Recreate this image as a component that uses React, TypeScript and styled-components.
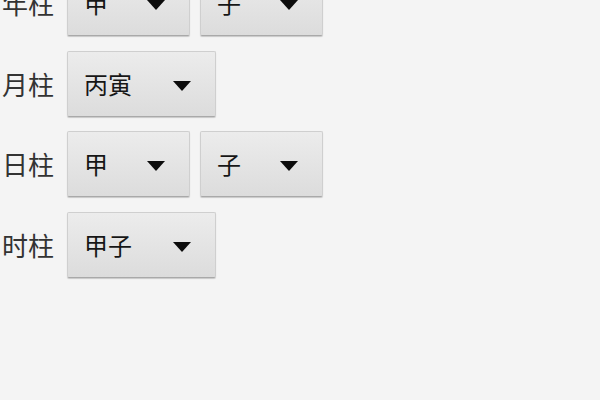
import { createGlobalStyle, styled } from "styled-components";

const GlobalStyle = createGlobalStyle`
  html, body {
    margin: 0;
    padding: 0;
    height: 100%;
    background: #f4f4f4;
    overflow: hidden;
  }
  body {
    font-family: "Noto Sans CJK SC", "Noto Sans", sans-serif;
  }
`;

type Pillar = {
  label: string;
  choices: string[];
};

const pillars: Pillar[] = [
  { label: "年柱", choices: ["甲", "子"] },
  { label: "月柱", choices: ["丙寅"] },
  { label: "日柱", choices: ["甲", "子"] },
  { label: "时柱", choices: ["甲子"] },
];

export default function App() {
  return (
    <>
      <GlobalStyle />
      <Form>
        {pillars.map((p) => (
          <Row key={p.label}>
            <Label>{p.label}</Label>
            {p.choices.map((c, i) => (
              <Spinner key={`${p.label}${i}`} $wide={p.choices.length === 1}>
                <SpinnerText>{c}</SpinnerText>
                <Caret viewBox="0 0 18 10">
                  <polygon points="0,0 18,0 9,10" />
                </Caret>
              </Spinner>
            ))}
          </Row>
        ))}
      </Form>
    </>
  );
}

const Form = styled.div`
  display: flex;
  flex-direction: column;
  gap: 14.5px;
  margin-top: -30px;
  padding-left: 2px;
`;

const Row = styled.div`
  display: flex;
  align-items: center;
  height: 66px;
`;

const Label = styled.span`
  width: 65px;
  font-size: 26px;
  line-height: 1;
  color: #333;
  letter-spacing: 0;
`;

const Spinner = styled.div<{ $wide: boolean }>`
  box-sizing: border-box;
  display: flex;
  align-items: center;
  justify-content: space-between;
  width: ${({ $wide }) => ($wide ? "149px" : "123px")};
  height: 66px;
  margin-right: 10px;
  padding: 0 24px 0 16px;
  border: 1px solid #cfcfcf;
  border-bottom-color: #a9a9a9;
  border-radius: 2px;
  background: linear-gradient(#ececec, #dcdcdc);
  box-shadow: 0 1px 1px rgba(0, 0, 0, 0.18);
`;

const SpinnerText = styled.span`
  font-size: 24px;
  line-height: 1;
  color: #161616;
`;

const Caret = styled.svg`
  width: 18px;
  height: 10px;
  margin-top: 4px;
  fill: #0c0c0c;
`;
